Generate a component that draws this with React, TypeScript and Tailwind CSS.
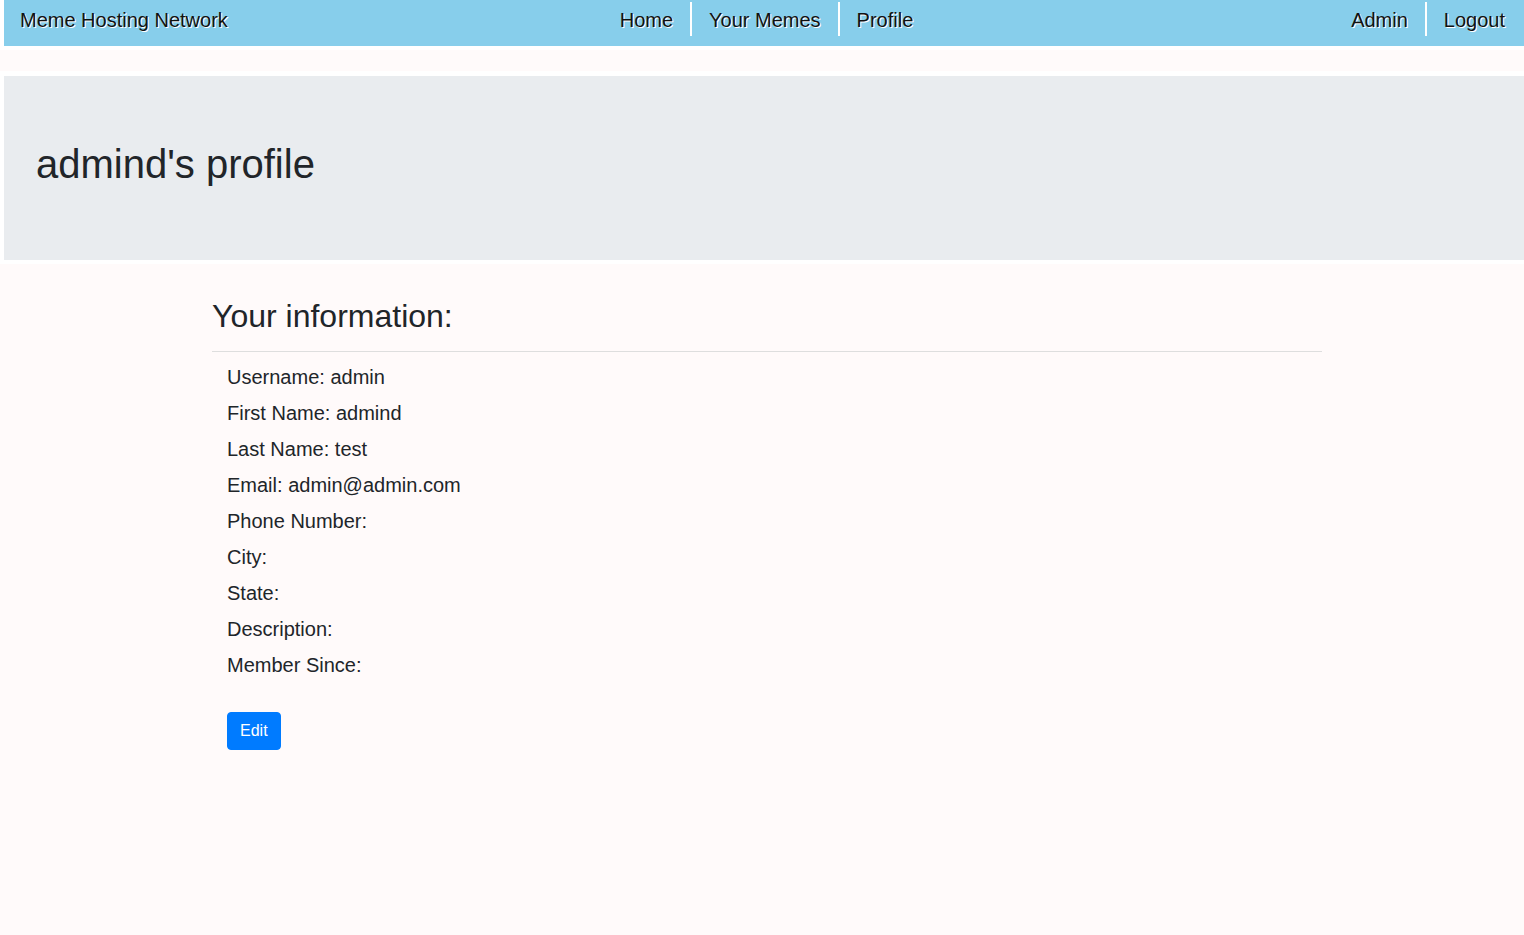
import React from "react";

const centerLinks = ["Home", "Your Memes", "Profile"];
const rightLinks = ["Admin", "Logout"];

const info = [
  { label: "Username", value: "admin" },
  { label: "First Name", value: "admind" },
  { label: "Last Name", value: "test" },
  { label: "Email", value: "admin@admin.com" },
  { label: "Phone Number", value: "" },
  { label: "City", value: "" },
  { label: "State", value: "" },
  { label: "Description", value: "" },
  { label: "Member Since", value: "" },
];

const NavList = ({ items }: { items: string[] }) => (
  <ul className="flex">
    {items.map((item, i) => (
      <li
        key={item}
        className={
          "mt-[2px] h-[34px] px-[17px] pt-[2px] leading-[32px] " +
          (i > 0 ? "border-l-2 border-white" : "")
        }
      >
        <a href="#" className="text-[#111] [text-shadow:1px_1px_0_#fff]">
          {item}
        </a>
      </li>
    ))}
  </ul>
);

export default function App() {
  return (
    <div className="flex min-h-screen flex-col bg-white font-['Liberation_Sans',Arial,sans-serif] text-[#212529]">
      <nav className="ml-[4px] grid h-[46px] grid-cols-[1fr_auto_1fr] bg-[#87ceeb] text-[20px]">
        <a
          href="#"
          className="mt-[2px] h-[34px] pl-[16px] pt-[2px] leading-[32px] text-[#111] [text-shadow:1px_1px_0_#fff]"
        >
          Meme Hosting Network
        </a>
        <div className="pl-[5px]">
          <NavList items={centerLinks} />
        </div>
        <div className="flex justify-end pr-[2px]">
          <NavList items={rightLinks} />
        </div>
      </nav>

      <div className="mt-[4px] h-[21px] bg-[#fffafa]" />

      <header className="ml-[4px] mt-[5px] bg-[#e9ecef] px-[32px] py-[64px]">
        <h1 className="mb-[8px] text-[40px] leading-[48px] font-normal">
          admind's profile
        </h1>
      </header>

      <main className="mt-[4px] flex flex-1 justify-center bg-[#fffafa] pl-[10px]">
        <section className="w-[1110px]">
          <h2 className="mt-[33px] border-b border-[#dedede] pb-[16px] text-[32px] leading-[38px] font-normal">
            Your information:
          </h2>
          <ul className="px-[15px] pt-[7px] text-[20px]">
            {info.map((row) => (
              <li key={row.label} className="h-[36px] leading-[36px]">
                {row.label}: {row.value}
              </li>
            ))}
          </ul>
          <button className="ml-[15px] mt-[29px] rounded-[4px] border border-[#007bff] bg-[#007bff] px-[12px] py-[6px] text-[16px] leading-[24px] text-white">
            Edit
          </button>
        </section>
      </main>
    </div>
  );
}
